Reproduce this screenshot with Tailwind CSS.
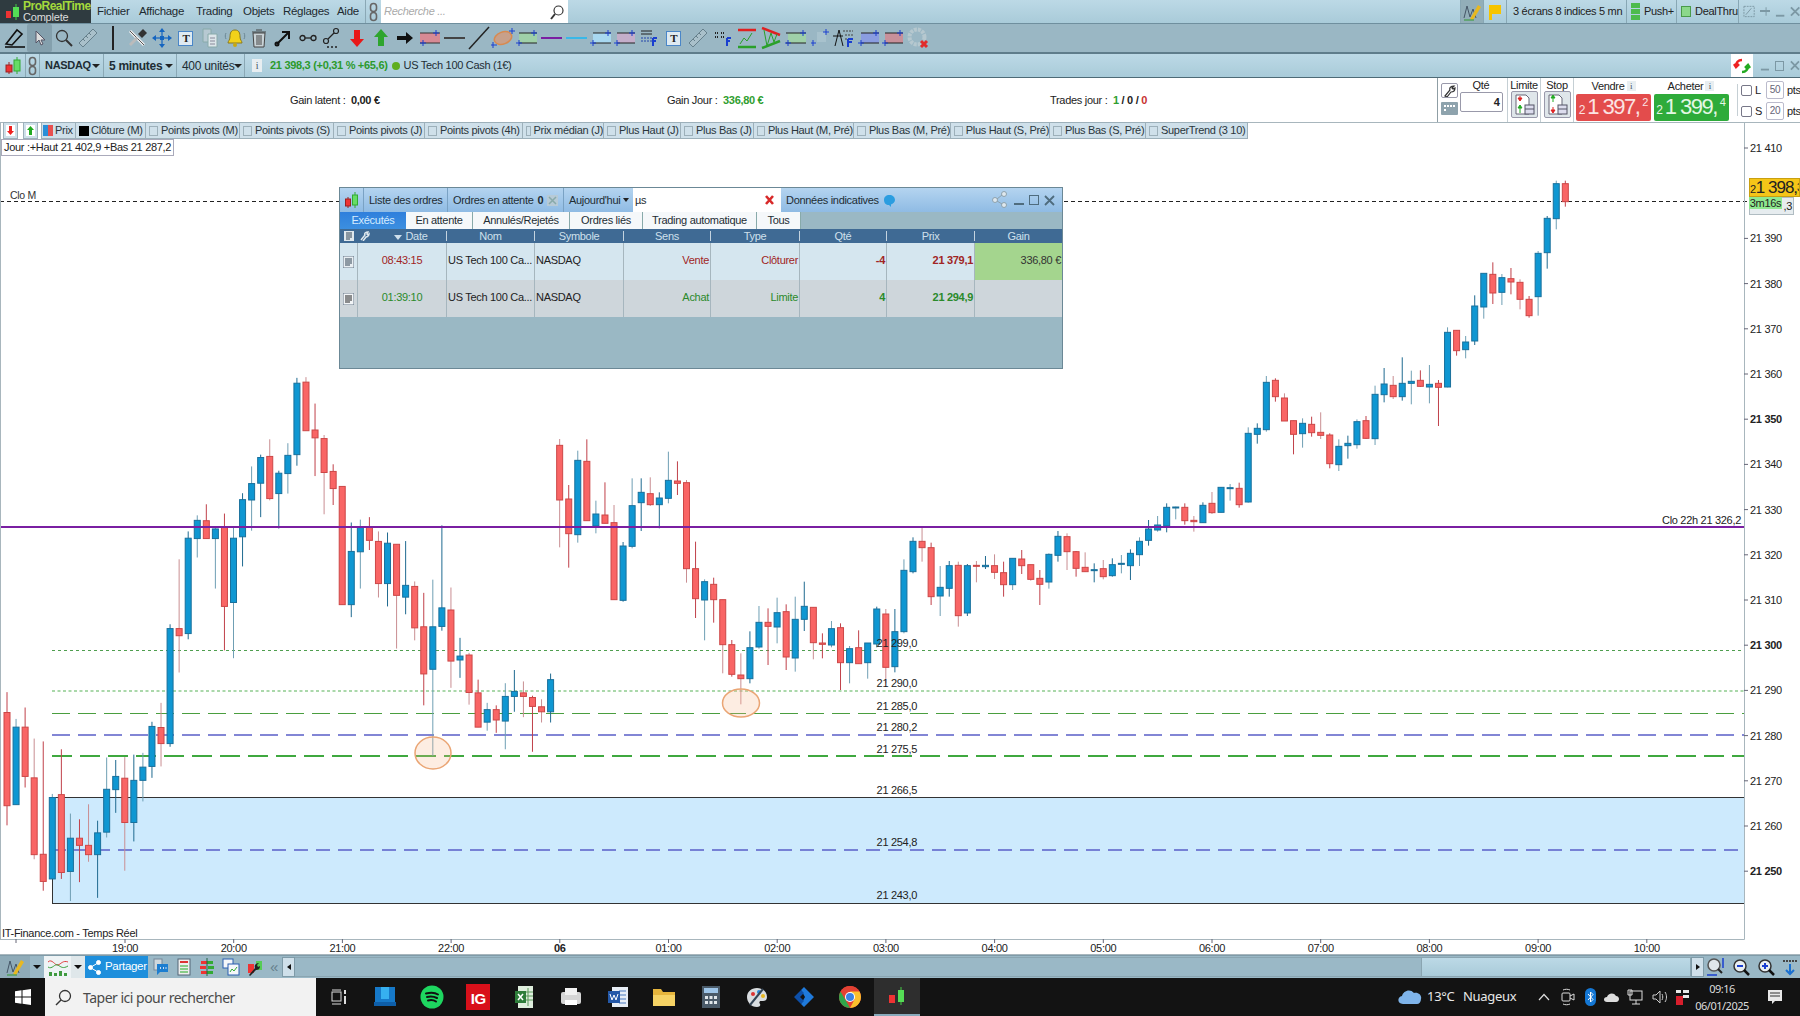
<!DOCTYPE html>
<html lang="fr">
<head>
<meta charset="UTF-8">
<title>ProRealTime</title>
<script src="https://cdn.jsdelivr.net/npm/@tailwindcss/browser@4"></script>
</head>
<body class="w-[1800px] h-[1016px] overflow-hidden flex flex-col bg-white text-[11px] tracking-[-0.3px] whitespace-nowrap text-[#222] font-['Liberation_Sans',Arial,sans-serif]">

<!-- title bar -->
<div class="h-[24px] flex items-center bg-gradient-to-b from-[#bcd9e6] to-[#a9cbd9] border-b border-[#6f8f9e]">
  <div class="w-[91px] h-full bg-[#2f3b40] flex items-center pl-[5px] gap-[3px] shrink-0">
    <svg width="15" height="18" viewBox="0 0 15 18"><rect x="1" y="8" width="5" height="7" fill="#e33"/><line x1="11" y1="1" x2="11" y2="17" stroke="#4c4"/><rect x="8" y="4" width="6" height="10" fill="#5d5"/></svg>
    <div class="leading-[11px]"><div class="text-[12px] text-[#a4d93c] font-bold tracking-[-0.5px]">ProRealTime</div><div class="text-[#ddd] text-[11px] tracking-[-0.2px]">Complete</div></div>
  </div>
  <div class="flex items-center text-[#1d2a30] pl-[6px] text-[11.500px]">
    <span class="w-[42px]">Fichier</span><span class="w-[57px]">Affichage</span><span class="w-[47px]">Trading</span><span class="w-[40px]">Objets</span><span class="w-[54px]">Réglages</span><span class="w-[27px]">Aide</span>
  </div>
  <div class="w-[15px] h-full flex items-center justify-center ml-[1px] mr-[1px] border-l border-[#8aa8b5]">
    <svg width="9" height="20" viewBox="0 0 9 20" fill="none" stroke="#666" stroke-width="1.6"><rect x="1.5" y="1.5" width="6" height="8" rx="3"/><rect x="1.5" y="10.5" width="6" height="8" rx="3"/></svg>
  </div>
  <div class="w-[187px] h-[23px] bg-white flex items-center justify-between pl-[3px] pr-[3px] italic text-[#aaa] text-[11px]">
    Recherche ...
    <svg width="16" height="16" viewBox="0 0 16 16" fill="none" stroke="#333"><circle cx="9.5" cy="6.5" r="4.5" stroke-width="1.2"/><line x1="6" y1="10" x2="2" y2="15" stroke-width="2"/></svg>
  </div>
  <div class="flex-1"></div>
  <div class="w-[24px] h-full bg-[#92aeb9] flex items-center justify-center border-x border-[#88a7b4]">
    <svg width="20" height="20" viewBox="0 0 20 20" fill="none"><path d="M2 16L5 4l3 11 3-8 3 9" stroke="#456" /><path d="M8 17L16 3l3 2-8 13z" fill="#e8b820"/><line x1="2" y1="18" x2="12" y2="18" stroke="#393"/></svg>
  </div>
  <div class="w-[23px] h-full flex items-center justify-center border-r border-[#88a7b4]">
    <svg width="16" height="18" viewBox="0 0 16 18"><path d="M2 2h12v9H5v6H2z" fill="#f6c400"/></svg>
  </div>
  <div class="w-[120px] pl-[6px] border-r border-[#88a7b4] h-full flex items-center">3 écrans 8 indices 5 mn</div>
  <div class="w-[50px] h-full flex items-center gap-[4px] pl-[4px] border-r border-[#88a7b4]">
    <div class="w-[9px] h-[18px] flex flex-col gap-[1px]"><div class="h-[5px] bg-[#4dbb4d]"></div><div class="h-[5px] bg-[#4dbb4d]"></div><div class="h-[5px] bg-[#4dbb4d]"></div></div><span>Push+</span>
  </div>
  <div class="w-[62px] h-full flex items-center gap-[4px] pl-[4px] border-r border-[#88a7b4]">
    <div class="w-[10px] h-[11px] bg-[#8bd88b] border border-[#4a9a4a]"></div><span>DealThru</span>
  </div>
  <div class="w-[61px] flex items-center text-[#7c98a4] pl-[4px] gap-[5px]">
    <svg width="13" height="13" viewBox="0 0 13 13" fill="none" stroke="#7c98a4"><rect x="1" y="1" width="11" height="11" stroke-dasharray="2 1"/><path d="M3 10l6-7"/></svg>
    <svg width="11" height="9" viewBox="0 0 11 9" fill="#7c98a4"><path d="M0 3h6V0l1 0v3h4v2H7v4H6V5H0z"/></svg>
    <svg width="10" height="12" viewBox="0 0 10 12"><rect x="1" y="9" width="9" height="2" fill="#7c98a4"/></svg>
    <svg width="11" height="11" viewBox="0 0 11 11" stroke="#7c98a4" stroke-width="2"><path d="M1 1l9 9M10 1l-9 9"/></svg>
  </div>
</div>

<!-- drawing toolbar -->
<div class="h-[30px] flex items-center pl-[3px] bg-[#9ab7c4] border-b-2 border-[#5f7d8b]">
  <div class="w-[24.4px] flex justify-center"><svg width="24" height="24" viewBox="0 0 24 24" fill="none" stroke="#111" stroke-width="1.6"><path d="M3 18L14 4l5 4-10 11z"/><line x1="2" y1="21" x2="22" y2="21"/></svg></div>
  <div class="w-[24.4px] h-[28px] flex justify-center items-center bg-[#84a0ad] rounded-[2px]"><svg width="14" height="18" viewBox="0 0 14 18"><path d="M3 2v12l3-3 2 5 2-1-2-4h4z" fill="#ddd" stroke="#556"/></svg></div>
  <div class="w-[24.4px] flex justify-center"><svg width="20" height="20" viewBox="0 0 20 20" fill="none" stroke="#333"><circle cx="8" cy="8" r="5.5" stroke-width="1.3"/><line x1="12" y1="12" x2="18" y2="18" stroke-width="2"/></svg></div>
  <div class="w-[24.4px] flex justify-center"><svg width="22" height="22" viewBox="0 0 22 22" fill="#a9c0ca" stroke="#66808c"><path d="M2 16L16 2l4 4L6 20z"/><path d="M6 12l2 2M9 9l2 2M12 6l2 2" fill="none"/></svg></div>
  <div class="w-[24.4px] flex justify-center"><div class="w-[2px] h-[24px] bg-[#222]"></div></div>
  <div class="w-[24.4px] flex justify-center"><svg width="22" height="22" viewBox="0 0 22 22" fill="none"><path d="M4 4l14 14" stroke="#eee" stroke-width="3"/><path d="M4 4l14 14" stroke="#555"/><path d="M12 7l5-5 4 4-5 5z" fill="#333"/><path d="M3 17l7-7 2 2-7 7z" fill="#bbb"/></svg></div>
  <div class="w-[24.4px] flex justify-center"><svg width="20" height="20" viewBox="0 0 20 20" fill="#1565c0"><path d="M10 0l3 4H7zM10 20l-3-4h6zM0 10l4-3v6zM20 10l-4 3V7z"/><rect x="8" y="8" width="4" height="4"/><rect x="9.4" y="3" width="1.2" height="14"/><rect x="3" y="9.4" width="14" height="1.2"/></svg></div>
  <div class="w-[24.4px] flex justify-center"><div class="w-[15px] h-[15px] border border-[#4a86c8] bg-[#dfeaf2] text-[11px] font-bold text-center leading-[13px] font-['Liberation_Serif',serif]">T</div></div>
  <div class="w-[24.4px] flex justify-center"><svg width="18" height="20" viewBox="0 0 18 20"><path d="M2 1h8v13H2z" fill="#b7c9d2" stroke="#8aa"/><path d="M7 6h9v13H7z" fill="#dde6ea" stroke="#8aa"/><path d="M9 10h5M9 13h5M9 16h5" stroke="#889"/></svg></div>
  <div class="w-[24.4px] flex justify-center"><svg width="24" height="20" viewBox="0 0 24 20" fill="none"><path d="M12 2c-4 0-5 3-5 7 0 3-2 4-2 6h14c0-2-2-3-2-6 0-4-1-7-5-7z" fill="#f2d21a" stroke="#8a7a20"/><circle cx="12" cy="17" r="2" fill="#c8a810"/><path d="M3 5c-1 2-1 4 0 6M21 5c1 2 1 4 0 6" stroke="#6b8794"/></svg></div>
  <div class="w-[24.4px] flex justify-center"><svg width="18" height="20" viewBox="0 0 18 20" fill="#c8d2d6" stroke="#444"><path d="M3 5h12l-1 14H4z"/><path d="M2 4h14M6 2h6M7 7v10M9 7v10M11 7v10" fill="none"/></svg></div>
  <div class="w-[24.4px] flex justify-center"><svg width="18" height="18" viewBox="0 0 18 18" fill="none" stroke="#111" stroke-width="2"><path d="M3 15L15 3M8 3h7v7"/><circle cx="3" cy="15" r="1.5"/></svg></div>
  <div class="w-[24.4px] flex justify-center"><svg width="18" height="10" viewBox="0 0 18 10" fill="none" stroke="#222" stroke-width="1.3"><circle cx="3.5" cy="5" r="2.5"/><circle cx="14.5" cy="5" r="2.5"/><line x1="6" y1="5" x2="12" y2="5"/></svg></div>
  <div class="w-[24.4px] flex justify-center"><svg width="20" height="22" viewBox="0 0 20 22" fill="none" stroke="#222" stroke-width="1.2"><circle cx="14" cy="4" r="2.5"/><circle cx="4" cy="14" r="2.5"/><line x1="12" y1="6" x2="6" y2="12"/><path d="M5 20h2M9 20h2M13 20h2" stroke-width="1.6"/></svg></div>
  <div class="w-[24.4px] flex justify-center"><svg width="14" height="18" viewBox="0 0 14 18"><path d="M4 1h6v9h4l-7 8-7-8h4z" fill="#e81818"/></svg></div>
  <div class="w-[24.4px] flex justify-center"><svg width="14" height="18" viewBox="0 0 14 18"><path d="M4 17h6V8h4L7 0 0 8h4z" fill="#2ea52e"/></svg></div>
  <div class="w-[24.4px] flex justify-center"><svg width="16" height="12" viewBox="0 0 16 12"><path d="M0 4h9V0l7 6-7 6V8H0z" fill="#111"/></svg></div>
  <div class="w-[24.4px] flex justify-center"><svg width="24" height="18" viewBox="0 0 24 18"><rect x="2" y="4" width="20" height="10" fill="#d78a94"/><path d="M2 4h20M2 14h20" stroke="#333"/><path d="M18 1v6M15 4h6M5 11v6M2 14h6" stroke="#1a3fd0"/></svg></div>
  <div class="w-[24.4px] flex justify-center"><div class="w-[21px] h-[2px] bg-[#444]"></div></div>
  <div class="w-[24.4px] flex justify-center"><svg width="22" height="24" viewBox="0 0 22 24"><line x1="1" y1="23" x2="21" y2="1" stroke="#222" stroke-width="1.5"/></svg></div>
  <div class="w-[24.4px] flex justify-center"><svg width="24" height="22" viewBox="0 0 24 22" fill="none"><ellipse cx="12" cy="11" rx="9" ry="6" transform="rotate(-20 12 11)" fill="#c8a08a" stroke="#d88a50" stroke-width="1.5"/><path d="M21 1v6M18 4h6M2 15v6M0 18h6" stroke="#1a3fd0"/></svg></div>
  <div class="w-[24.4px] flex justify-center"><svg width="24" height="18" viewBox="0 0 24 18"><rect x="4" y="4" width="18" height="10" fill="#9fd0a8"/><path d="M4 4h18M4 14h18" stroke="#222"/><path d="M19 1v6M16 4h6M4 11v6M1 14h6" stroke="#1a3fd0"/></svg></div>
  <div class="w-[24.4px] flex justify-center"><div class="w-[21px] h-[2px] bg-[#7a1fa2]"></div></div>
  <div class="w-[24.4px] flex justify-center"><div class="w-[21px] h-[2px] bg-[#39b8e8]"></div></div>
  <div class="w-[24.4px] flex justify-center"><svg width="24" height="18" viewBox="0 0 24 18"><rect x="4" y="4" width="18" height="10" fill="#a8d8f0"/><path d="M4 4h18M4 14h18" stroke="#222"/><path d="M19 1v6M16 4h6M4 11v6M1 14h6" stroke="#1a3fd0"/></svg></div>
  <div class="w-[24.4px] flex justify-center"><svg width="24" height="18" viewBox="0 0 24 18"><rect x="4" y="4" width="18" height="10" fill="#c4aeca"/><path d="M4 4h18M4 14h18" stroke="#222"/><path d="M19 1v6M16 4h6M4 11v6M1 14h6" stroke="#1a3fd0"/></svg></div>
  <div class="w-[24.4px] flex justify-center"><svg width="18" height="18" viewBox="0 0 18 18"><path d="M1 2h11M1 5h11" stroke="#222"/><path d="M1 9h11M1 12h11" stroke="#2244aa" stroke-dasharray="2 1"/><path d="M13 9h4M13 12h3M13 9v8" stroke="#1a3fd0" stroke-width="2"/></svg></div>
  <div class="w-[24.4px] flex justify-center"><div class="w-[15px] h-[15px] border border-[#4a86c8] bg-[#dfeaf2] text-[11px] font-bold text-center leading-[13px] font-['Liberation_Serif',serif]">T</div></div>
  <div class="w-[24.4px] flex justify-center"><svg width="22" height="22" viewBox="0 0 22 22" fill="#a9c0ca" stroke="#66808c"><path d="M2 16L16 2l4 4L6 20z"/><path d="M6 12l2 2M9 9l2 2M12 6l2 2" fill="none"/></svg></div>
  <div class="w-[24.4px] flex justify-center"><svg width="18" height="18" viewBox="0 0 18 18"><path d="M1 4h4M7 4h4M1 8h4M7 8h4" stroke="#222" stroke-dasharray="1 1" stroke-width="2"/><path d="M13 9h4M13 12h3M13 9v8" stroke="#1a3fd0" stroke-width="2"/></svg></div>
  <div class="w-[24.4px] flex justify-center"><svg width="20" height="22" viewBox="0 0 20 22" fill="none"><path d="M1 3h18" stroke="#e02020" stroke-width="2.5"/><path d="M1 20h18" stroke="#2aa02a" stroke-width="2.5"/><path d="M3 17l4-6 3 3 5-8" stroke="#2aa02a"/></svg></div>
  <div class="w-[24.4px] flex justify-center"><svg width="22" height="24" viewBox="0 0 22 24" fill="none"><path d="M2 2l18 7" stroke="#e02020" stroke-width="2.5"/><path d="M2 22l18-7" stroke="#2aa02a" stroke-width="2.5"/><path d="M4 4l3 16 4-13 3 9 3-8" stroke="#2aa02a"/></svg></div>
  <div class="w-[24.4px] flex justify-center"><svg width="24" height="18" viewBox="0 0 24 18"><rect x="4" y="4" width="18" height="10" fill="#9fd0a8"/><path d="M2 4h20M2 14h20" stroke="#222"/><path d="M19 1v6M16 4h6M4 11v6M1 14h6" stroke="#1a3fd0"/></svg></div>
  <div class="w-[24.4px] flex justify-center"><svg width="18" height="18" viewBox="0 0 18 18"><rect x="6" y="3" width="9" height="10" fill="#a8c2cd"/><path d="M15 0v6M12 3h6M2 11v6M0 14h5" stroke="#1a3fd0"/></svg></div>
  <div class="w-[24.4px] flex justify-center"><svg width="22" height="20" viewBox="0 0 22 20"><path d="M6 2L2 18M6 2l4 16M0 8h10" stroke="#111"/><path d="M10 3h10M12 7h8M12 11h6" stroke="#444" stroke-dasharray="2 1"/><path d="M15 11h5M15 14h4M15 11v8" stroke="#1a3fd0" stroke-width="2"/></svg></div>
  <div class="w-[24.4px] flex justify-center"><svg width="24" height="18" viewBox="0 0 24 18"><rect x="4" y="4" width="18" height="10" fill="#8a9de0"/><path d="M4 4h18M4 14h18" stroke="#222"/><path d="M19 1v6M16 4h6M4 11v6M1 14h6" stroke="#1a3fd0"/></svg></div>
  <div class="w-[24.4px] flex justify-center"><svg width="24" height="18" viewBox="0 0 24 18"><rect x="4" y="4" width="18" height="10" fill="#c8909a"/><path d="M4 4h18M4 14h18" stroke="#222"/><path d="M19 1v6M16 4h6M4 11v6M1 14h6" stroke="#1a3fd0"/></svg></div>
  <div class="w-[24.4px] flex justify-center"><svg width="22" height="24" viewBox="0 0 22 24" fill="none"><circle cx="10" cy="11" r="7.5" stroke="#b6c8cf" stroke-width="4" stroke-dasharray="3 1"/><path d="M14 15l6 6M20 15l-6 6" stroke="#e02b2b" stroke-width="3"/></svg></div>
</div>

<!-- instrument bar -->
<div class="h-[24px] flex items-center bg-gradient-to-b from-[#bcd9e6] to-[#a9cbd9] border-b border-[#4e6a76]">
  <div class="w-[26px] h-full flex items-center justify-center border-r border-[#8aa8b5]"><svg width="18" height="20" viewBox="0 0 18 20"><line x1="5" y1="6" x2="5" y2="18" stroke="#922"/><rect x="2" y="9" width="6" height="7" fill="#e33" stroke="#922"/><line x1="13" y1="1" x2="13" y2="18" stroke="#3a3"/><rect x="10" y="4" width="6" height="11" fill="#6d6" stroke="#3a3"/></svg></div>
  <div class="w-[14px] h-full flex items-center justify-center border-r border-[#8aa8b5]"><svg width="9" height="20" viewBox="0 0 9 20" fill="none" stroke="#666" stroke-width="1.6"><rect x="1.5" y="1.5" width="6" height="8" rx="3"/><rect x="1.5" y="10.5" width="6" height="8" rx="3"/></svg></div>
  <div class="w-[64px] h-full flex items-center justify-between pl-[5px] pr-[3px] border-r border-[#8aa8b5] font-bold text-[#1e2d34]">NASDAQ<span class="w-0 h-0 border-x-[4px] border-x-transparent border-t-[4px] border-t-[#222]"></span></div>
  <div class="w-[73px] h-full flex items-center justify-between pl-[5px] pr-[3px] border-r border-[#8aa8b5] font-bold text-[#1e2d34] text-[12px]">5 minutes<span class="w-0 h-0 border-x-[4px] border-x-transparent border-t-[4px] border-t-[#222]"></span></div>
  <div class="w-[68px] h-full flex items-center justify-between pl-[5px] pr-[3px] border-r border-[#8aa8b5] text-[#1e2d34] text-[12px]">400 unités<span class="w-0 h-0 border-x-[4px] border-x-transparent border-t-[4px] border-t-[#222]"></span></div>
  <div class="w-[10px] h-[13px] ml-[7px] bg-[#e8eef1] text-[10px] text-center text-[#456] leading-[13px] font-['Liberation_Serif',serif]">i</div>
  <span class="ml-[8px] font-bold text-[#2c9a2c]">21 398,3 (+0,31 % +65,6)</span>
  <span class="w-[8px] h-[8px] rounded-full bg-[#5fae1f] ml-[4px] mr-[4px]"></span>
  <span class="text-[#1e2d34]">US Tech 100 Cash (1€)</span>
  <div class="flex-1"></div>
  <div class="w-[22px] h-full bg-white flex items-center justify-center"><svg width="18" height="18" viewBox="0 0 18 18" fill="none" stroke-width="2.5"><path d="M9 3C5 3 3 6 3 9M1 7l2 3 3-3" stroke="#e22"/><path d="M9 15c4 0 6-3 6-6M17 11l-2-3-3 3" stroke="#2a2"/></svg></div>
  <div class="w-[47px] flex items-center text-[#7c98a4] pl-[7px] gap-[6px]">
    <svg width="10" height="12" viewBox="0 0 10 12"><rect x="1" y="9" width="9" height="2" fill="#7c98a4"/></svg>
    <div class="w-[10px] h-[10px] border-[1.5px] border-[#7c98a4]"></div>
    <svg width="11" height="11" viewBox="0 0 11 11" stroke="#7c98a4" stroke-width="2"><path d="M1 1l9 9M10 1l-9 9"/></svg>
  </div>
</div>

<!-- daily stats and order ticket -->
<div class="h-[44px] flex bg-white">
  <div class="w-[1437px] shrink-0 grid grid-cols-[290px_377px_383px_1fr] items-center">
    <span></span>
    <span>Gain latent :&nbsp; <b>0,00 €</b></span>
    <span>Gain Jour :&nbsp; <b class="text-[#2f9e2f]">336,80 €</b></span>
    <span>Trades jour :&nbsp; <b class="text-[#2f9e2f]">1</b> <b>/ 0 /</b> <b class="text-[#c83232]">0</b></span>
  </div>
  <div class="w-[363px] shrink-0 overflow-hidden border-l border-[#8f9ea5] flex">
    <div class="w-[21px] shrink-0 pl-[3px] pt-[5px] flex flex-col gap-[4px]">
      <div class="w-[17px] h-[15px] border border-[#99a] rounded-[2px] flex items-center justify-center"><svg width="12" height="12" viewBox="0 0 12 12" fill="none" stroke="#333" stroke-width="1.2"><path d="M1 11l5-6c-1-2 1-4 4-4L8 3l1 1 2-1c0 3-2 4-4 4l-4 5z"/></svg></div>
      <div class="w-[17px] h-[13px] bg-[#8ea3ad] rounded-[1px] border-[3px] border-[#8ea3ad] flex flex-wrap gap-[1px]"><div class="w-[2px] h-[2px] bg-white"></div><div class="w-[2px] h-[2px] bg-white"></div><div class="w-[2px] h-[2px] bg-white"></div><div class="w-[2px] h-[2px] bg-white"></div><div class="w-[2px] h-[2px] bg-white"></div></div>
    </div>
    <div class="w-[44px] shrink-0 flex flex-col items-center pt-[1px]">
      <span class="leading-[12px]">Qté</span>
      <div class="w-[43px] h-[20px] mt-[1px] border border-[#99a] rounded-[2px] text-right pr-[2px] leading-[18px] font-bold">4</div>
    </div>
    <div class="w-[4px] shrink-0"></div>
    <div class="w-[33px] shrink-0 flex flex-col items-center pt-[1px] border-l border-[#c5cfd4]">
      <span class="leading-[12px]">Limite</span>
      <div class="w-[27px] h-[27px] bg-[#dfe6ea] border border-[#99a] rounded-[2px] flex items-center justify-center"><svg width="21" height="22" viewBox="0 0 21 22"><path d="M2 1h10l3 3v16H2z" fill="#fff" stroke="#667"/><path d="M6 2v3M4 4l2 3 2-3z" fill="#d22" stroke="#d22"/><path d="M6 19v-5M4 14l2-3 2 3z" fill="#2a2" stroke="#2a2"/><rect x="11" y="11" width="9" height="9" fill="#dde" stroke="#556"/><line x1="11" y1="15" x2="20" y2="15" stroke="#556"/></svg></div>
    </div>
    <div class="w-[33px] shrink-0 flex flex-col items-center pt-[1px] border-l border-[#c5cfd4]">
      <span class="leading-[12px]">Stop</span>
      <div class="w-[27px] h-[27px] bg-[#dfe6ea] border border-[#99a] rounded-[2px] flex items-center justify-center"><svg width="21" height="22" viewBox="0 0 21 22"><path d="M2 1h10l3 3v16H2z" fill="#fff" stroke="#667"/><path d="M6 8V3M4 4l2-3 2 3z" fill="#2a2" stroke="#2a2"/><path d="M6 13v3M4 16l2 3 2-3z" fill="#d22" stroke="#d22"/><rect x="11" y="11" width="9" height="9" fill="#dde" stroke="#556"/><line x1="11" y1="15" x2="20" y2="15" stroke="#556"/></svg></div>
    </div>
    <div class="w-[2px] shrink-0 border-l border-[#c5cfd4]"></div>
    <div class="w-[77px] shrink-0 flex flex-col items-center">
      <span class="leading-[14px] pt-[1px] flex items-center gap-[2px]">Vendre <span class="w-[9px] h-[10px] bg-[#e8eef1] text-[9px] text-center text-[#456] leading-[10px] font-['Liberation_Serif',serif]">i</span></span>
      <div class="w-[75px] h-[27px] mt-[1px] rounded-[2px] bg-[#e34c4c] text-[#fbe3e3] flex items-baseline justify-center leading-[26px] overflow-hidden"><span class="text-[12px] mr-[2px]">2</span><span class="text-[22px] tracking-[-1.5px]">1 397,</span><span class="text-[11px] relative top-[-8px] ml-[3px]">2</span></div>
    </div>
    <div class="w-[78px] shrink-0 flex flex-col items-center">
      <span class="leading-[14px] pt-[1px] flex items-center gap-[2px]">Acheter <span class="w-[9px] h-[10px] bg-[#e8eef1] text-[9px] text-center text-[#456] leading-[10px] font-['Liberation_Serif',serif]">i</span></span>
      <div class="w-[75px] h-[27px] mt-[1px] rounded-[2px] bg-[#2eab3a] text-[#e4f7e4] flex items-baseline justify-center leading-[26px] overflow-hidden"><span class="text-[12px] mr-[2px]">2</span><span class="text-[22px] tracking-[-1.5px]">1 399,</span><span class="text-[11px] relative top-[-8px] ml-[3px]">4</span></div>
    </div>
    <div class="w-[8px] shrink-0 border-r border-[#c5cfd4] my-[6px]"></div>
    <div class="pl-[3px] pt-[3px] flex flex-col gap-[3px]">
      <div class="flex items-center gap-[3px] h-[18px]"><div class="w-[11px] h-[11px] border border-[#778] rounded-[2px]"></div><span class="w-[8px]">L</span><div class="w-[18px] h-[18px] border border-[#bbc] rounded-[2px] text-[10px] text-center leading-[16px] text-[#667]">50</div><span>pts</span></div>
      <div class="flex items-center gap-[3px] h-[18px]"><div class="w-[11px] h-[11px] border border-[#778] rounded-[2px]"></div><span class="w-[8px]">S</span><div class="w-[18px] h-[18px] border border-[#bbc] rounded-[2px] text-[10px] text-center leading-[16px] text-[#667]">20</div><span>pts</span></div>
    </div>
  </div>
</div>

<!-- chart -->
<div class="relative h-[833px] border-t border-[#a8b6bd]">
  <svg id="chart" class="absolute left-0 top-[-1px] font-['Liberation_Sans',Arial,sans-serif]" width="1800" height="833" viewBox="0 122 1800 833"></svg>

  <div class="absolute left-[3px] top-[-1px] h-[17px] flex items-stretch text-[#2a363c]">
    <div class="w-[15px] mr-[5px] bg-[#cfe0ea] border border-[#9db0ba] flex items-center justify-center"><svg width="9" height="11" viewBox="0 0 9 11"><rect x="0" y="0" width="9" height="11" fill="#fff"/><path d="M3 1h3v5h2L4.500 10 1 6h2z" fill="#e22"/></svg></div>
    <div class="w-[15px] mr-[3px] bg-[#cfe0ea] border border-[#9db0ba] flex items-center justify-center"><svg width="9" height="11" viewBox="0 0 9 11"><rect x="0" y="0" width="9" height="11" fill="#fff"/><path d="M3 10h3V5h2L4.500 1 1 5h2z" fill="#2a2"/></svg></div>
    <div class="w-[34px] bg-[#cfe0ea] border-y border-l border-[#9db0ba] flex items-center gap-[2px] pl-[1px]"><div class="w-[10px] h-[11px] bg-[linear-gradient(90deg,#2a8fd8_50%,#e85050_50%)]"></div>Prix</div>
    <div class="w-[70px] bg-[#cfe0ea] border-y border-l border-[#9db0ba] flex items-center gap-[2px] pl-[3px]"><div class="w-[10px] h-[10px] bg-black"></div>Clôture (M)</div>
    <div class="w-[94px] bg-[#cfe0ea] border-y border-l border-[#9db0ba] flex items-center gap-[3px] pl-[3px]"><div class="w-[9px] h-[10px] border border-[#9db0ba]"></div>Points pivots (M)</div>
    <div class="w-[94px] bg-[#cfe0ea] border-y border-l border-[#9db0ba] flex items-center gap-[3px] pl-[3px]"><div class="w-[9px] h-[10px] border border-[#9db0ba]"></div>Points pivots (S)</div>
    <div class="w-[91px] bg-[#cfe0ea] border-y border-l border-[#9db0ba] flex items-center gap-[3px] pl-[3px]"><div class="w-[9px] h-[10px] border border-[#9db0ba]"></div>Points pivots (J)</div>
    <div class="w-[98px] bg-[#cfe0ea] border-y border-l border-[#9db0ba] flex items-center gap-[3px] pl-[3px]"><div class="w-[9px] h-[10px] border border-[#9db0ba]"></div>Points pivots (4h)</div>
    <div class="w-[81px] bg-[#cfe0ea] border-y border-l border-[#9db0ba] flex items-center gap-[3px] pl-[3px]"><div class="w-[9px] h-[10px] border border-[#9db0ba]"></div>Prix médian (J)</div>
    <div class="w-[77px] bg-[#cfe0ea] border-y border-l border-[#9db0ba] flex items-center gap-[3px] pl-[3px]"><div class="w-[9px] h-[10px] border border-[#9db0ba]"></div>Plus Haut (J)</div>
    <div class="w-[73px] bg-[#cfe0ea] border-y border-l border-[#9db0ba] flex items-center gap-[3px] pl-[3px]"><div class="w-[9px] h-[10px] border border-[#9db0ba]"></div>Plus Bas (J)</div>
    <div class="w-[100px] bg-[#cfe0ea] border-y border-l border-[#9db0ba] flex items-center gap-[3px] pl-[3px]"><div class="w-[9px] h-[10px] border border-[#9db0ba]"></div>Plus Haut (M, Pré)</div>
    <div class="w-[97px] bg-[#cfe0ea] border-y border-l border-[#9db0ba] flex items-center gap-[3px] pl-[3px]"><div class="w-[9px] h-[10px] border border-[#9db0ba]"></div>Plus Bas (M, Pré)</div>
    <div class="w-[99px] bg-[#cfe0ea] border-y border-l border-[#9db0ba] flex items-center gap-[3px] pl-[3px]"><div class="w-[9px] h-[10px] border border-[#9db0ba]"></div>Plus Haut (S, Pré)</div>
    <div class="w-[96px] bg-[#cfe0ea] border-y border-l border-[#9db0ba] flex items-center gap-[3px] pl-[3px]"><div class="w-[9px] h-[10px] border border-[#9db0ba]"></div>Plus Bas (S, Pré)</div>
    <div class="w-[103px] bg-[#cfe0ea] border border-[#9db0ba] flex items-center gap-[3px] pl-[3px]"><div class="w-[9px] h-[10px] border border-[#9db0ba]"></div>SuperTrend (3 10)</div>
  </div>
  <div class="absolute left-[1px] top-[16px] h-[17px] px-[2px] bg-white border border-[#aab] text-[#222] leading-[15px]">Jour :+Haut 21 402,9 +Bas 21 287,2</div>

  <!-- order list window -->
  <div class="absolute left-[339px] top-[64px] w-[724px] h-[182px] bg-[#9ab8c4] border border-[#6b8896] flex flex-col">
    <div class="h-[24px] flex items-center bg-gradient-to-b from-[#b4d4f0] to-[#8fbbe4] text-[#1e2d34]">
      <div class="w-[24px] h-full flex items-center justify-center border-r border-[#7aa2c4]"><svg width="16" height="18" viewBox="0 0 16 18"><line x1="4" y1="6" x2="4" y2="17" stroke="#922"/><rect x="1.500" y="8" width="5" height="7" fill="#e33" stroke="#922"/><line x1="11" y1="1" x2="11" y2="17" stroke="#3a3"/><rect x="8.500" y="4" width="5" height="10" fill="#6d6" stroke="#3a3"/></svg></div>
      <div class="w-[84px] h-full flex items-center pl-[5px] border-r border-[#7aa2c4]">Liste des ordres</div>
      <div class="w-[116px] h-full flex items-center pl-[5px] gap-[4px] border-r border-[#7aa2c4]">Ordres en attente <b>0</b><svg width="11" height="11" viewBox="0 0 11 11"><rect width="11" height="11" fill="#b7cad6"/><path d="M2 2l7 7M9 2l-7 7" stroke="#8aa" stroke-width="1.5"/></svg></div>
      <div class="w-[69px] h-full flex items-center pl-[5px] gap-[3px]">Aujourd'hui<span class="w-0 h-0 border-x-[3px] border-x-transparent border-t-[4px] border-t-[#222]"></span></div>
      <div class="w-[148px] h-full bg-white flex items-center justify-between pl-[2px] pr-[7px]">
        <span>µs</span>
        <svg width="9" height="10" viewBox="0 0 9 10" stroke="#d82a2a" stroke-width="2.600"><path d="M1 1l7 8M8 1l-7 8"/></svg>
      </div>
      <div class="flex-1 h-full flex items-center pl-[5px] gap-[4px]">Données indicatives
        <svg width="13" height="13" viewBox="0 0 13 13"><path d="M6.500 1C3 1 1 3 1 6s2 5 5 5l2 2v-2.500c2-1 4-2.500 4-4.500 0-3-2.500-5-5.500-5z" fill="#2b9de0"/></svg>
      </div>
      <div class="w-[75px] h-full flex items-center pl-[5px] gap-[5px] text-[#5f7e92]">
        <svg width="17" height="18" viewBox="0 0 17 18" fill="#dfe8ee" stroke="#8ea2ae"><circle cx="3" cy="9" r="2.500"/><circle cx="12" cy="3" r="2.500"/><circle cx="12" cy="14" r="2.500"/><path d="M5 8l5-4M5 10l5 3" fill="none"/></svg>
        <svg width="10" height="12" viewBox="0 0 10 12"><rect x="0" y="9" width="10" height="2" fill="#4f6c7e"/></svg>
        <div class="w-[10px] h-[10px] border-[1.5px] border-[#4f6c7e]"></div>
        <svg width="11" height="11" viewBox="0 0 11 11" stroke="#4f6c7e" stroke-width="1.800"><path d="M1 1l9 9M10 1l-9 9"/></svg>
      </div>
    </div>
    <div class="h-[17px] flex items-stretch text-center text-[#1e2d34]">
      <div class="w-[66px] bg-gradient-to-b from-[#2f7fdc] to-[#3c8fe0] text-[#d5ecff] leading-[17px]">Exécutés</div>
      <div class="w-[67px] bg-[#f5f8fa] border-r border-[#8aa] leading-[17px]">En attente</div>
      <div class="w-[97px] bg-[#f5f8fa] border-r border-[#8aa] leading-[17px]">Annulés/Rejetés</div>
      <div class="w-[73px] bg-[#f5f8fa] border-r border-[#8aa] leading-[17px]">Ordres liés</div>
      <div class="w-[114px] bg-[#f5f8fa] border-r border-[#8aa] leading-[17px]">Trading automatique</div>
      <div class="w-[44px] bg-[#f5f8fa] border-r border-[#8aa] leading-[17px]">Tous</div>
    </div>
    <div class="h-[14px] grid grid-cols-[18px_89px_88px_89px_87px_89px_87px_88px_1fr] bg-[#3f6a94] text-[#cfe0ec] text-center leading-[14px]">
      <div class="flex items-center justify-center"><svg width="10" height="10" viewBox="0 0 10 10"><rect width="10" height="10" fill="#dfe8ee"/><path d="M2 2h6M2 4h6M2 6h6M2 8h4" stroke="#345"/></svg></div>
      <div class="relative border-r border-[#c4d3df] my-[2px] leading-[10px] pl-[18px]"><svg class="absolute left-[2px] top-0" width="10" height="10" viewBox="0 0 10 10" fill="none" stroke="#dfe8ee" stroke-width="1.500"><path d="M1 9l4-5c-1-2 1-3 3-3L7 3l1 1 1-1c0 2-2 3-3 3L3 10"/></svg><span class="inline-block w-0 h-0 border-x-[4px] border-x-transparent border-t-[5px] border-t-[#cfe0ec] mr-[3px]"></span>Date</div>
      <div class="border-r border-[#c4d3df] my-[2px] leading-[10px]">Nom</div>
      <div class="border-r border-[#c4d3df] my-[2px] leading-[10px]">Symbole</div>
      <div class="border-r border-[#c4d3df] my-[2px] leading-[10px]">Sens</div>
      <div class="border-r border-[#c4d3df] my-[2px] leading-[10px]">Type</div>
      <div class="border-r border-[#c4d3df] my-[2px] leading-[10px]">Qté</div>
      <div class="border-r border-[#c4d3df] my-[2px] leading-[10px]">Prix</div>
      <div class="my-[2px] leading-[10px]">Gain</div>
    </div>
    <div class="h-[37px] grid grid-cols-[18px_89px_88px_89px_87px_89px_87px_88px_1fr] bg-[#d5e6ef] text-[#a02424] items-stretch leading-[35px]">
      <div class="flex items-center justify-center border-r border-[#a6b6be]"><svg width="11" height="12" viewBox="0 0 11 12"><rect width="11" height="12" fill="#e8eef2" stroke="#678"/><path d="M2 3h7M2 5h7M2 7h7M2 9h5" stroke="#345"/></svg></div>
      <div class="text-center border-r border-[#a6b6be]">08:43:15</div>
      <div class="pl-[1px] text-[#222] border-r border-[#a6b6be]">US Tech 100 Ca...</div>
      <div class="pl-[1px] text-[#222] border-r border-[#a6b6be]">NASDAQ</div>
      <div class="text-right pr-[1px] border-r border-[#a6b6be]">Vente</div>
      <div class="text-right pr-[1px] border-r border-[#a6b6be]">Clôturer</div>
      <div class="text-right pr-[1px] font-bold border-r border-[#a6b6be]">-4</div>
      <div class="text-right pr-[1px] font-bold border-r border-[#a6b6be]">21 379,1</div>
      <div class="text-right pr-[1px] bg-[#a4d58e] text-[#333]">336,80 €</div>
    </div>
    <div class="h-[37px] grid grid-cols-[18px_89px_88px_89px_87px_89px_87px_88px_1fr] bg-[#ced6db] text-[#2a8a2a] items-stretch leading-[35px]">
      <div class="flex items-center justify-center border-r border-[#a6b6be]"><svg width="11" height="12" viewBox="0 0 11 12"><rect width="11" height="12" fill="#f2f5f7" stroke="#678"/><path d="M2 3h7M2 5h7M2 7h7M2 9h5" stroke="#222"/></svg></div>
      <div class="text-center border-r border-[#a6b6be]">01:39:10</div>
      <div class="pl-[1px] text-[#222] border-r border-[#a6b6be]">US Tech 100 Ca...</div>
      <div class="pl-[1px] text-[#222] border-r border-[#a6b6be]">NASDAQ</div>
      <div class="text-right pr-[1px] border-r border-[#a6b6be]">Achat</div>
      <div class="text-right pr-[1px] border-r border-[#a6b6be]">Limite</div>
      <div class="text-right pr-[1px] font-bold border-r border-[#a6b6be]">4</div>
      <div class="text-right pr-[1px] font-bold border-r border-[#a6b6be]">21 294,9</div>
      <div></div>
    </div>
  </div>

  <!-- last price tag -->
  <div class="absolute left-[1749px] top-[55px] w-[51px] h-[19px] bg-[#f5c518] border border-[#c9a010] text-[#222] leading-[18px] overflow-hidden"><span class="text-[11px]">2</span><span class="text-[17px] tracking-[-1px]">1 398,</span><span class="text-[10px] align-top">3</span></div>
  <div class="absolute left-[1749px] top-[74px] w-[45px] h-[18px] bg-[#e6ecef] border border-[#b0bcc2] text-right pr-[1px] leading-[16px]">,3</div>
  <div class="absolute left-[1749px] top-[74px] w-[33px] h-[12px] bg-[#8fe88f] text-center leading-[12px]">3m16s</div>
</div>

<!-- bottom toolbar -->
<div class="h-[23px] flex items-stretch bg-[#9ab8c6] border-t border-[#7f9ba8]">
  <div class="w-[30px] flex items-center justify-center bg-[#8fabb8]"><svg width="20" height="20" viewBox="0 0 20 20" fill="none"><path d="M2 16L5 4l3 11 3-8 3 9" stroke="#456"/><path d="M8 17L16 3l3 2-8 13z" fill="#e8b820"/><line x1="2" y1="18" x2="12" y2="18" stroke="#393"/></svg></div>
  <div class="w-[14px] flex items-center justify-center"><span class="w-0 h-0 border-x-[4px] border-x-transparent border-t-[4px] border-t-[#111]"></span></div>
  <div class="w-[27px] flex items-center justify-center bg-[#eef3f5]"><svg width="22" height="20" viewBox="0 0 22 20" fill="none"><path d="M1 5c4-4 7 4 10 3s5-5 10-3" stroke="#e04040"/><path d="M1 10c4 3 7-4 10-2s5 4 10 1" stroke="#3ba03b"/><path d="M2 19v-4h3v4zM7 19v-3h3v3zM12 19v-5h3v5zM17 19v-3h3v3z" fill="#3f9a3f"/></svg></div>
  <div class="w-[14px] flex items-center justify-center bg-[#dfe7ea]"><span class="w-0 h-0 border-x-[4px] border-x-transparent border-t-[4px] border-t-[#111]"></span></div>
  <div class="w-[63px] bg-[#1e8fdc] flex items-center gap-[4px] pl-[3px] text-white text-[11.500px]"><svg width="13" height="15" viewBox="0 0 13 15" fill="#fff" stroke="#fff"><circle cx="2.500" cy="7.500" r="2"/><circle cx="10.500" cy="2.500" r="2"/><circle cx="10.500" cy="12.500" r="2"/><path d="M3 7l7-4M3 8l7 4" fill="none"/></svg>Partager</div>
  <div class="w-[24px] flex items-center justify-center ml-[1px]"><svg width="16" height="18" viewBox="0 0 16 18"><rect x="1" y="1" width="8" height="11" fill="#cfd8dd" stroke="#789"/><path d="M4 6h11v8H7l-3 3z" fill="#1d7ed0"/><path d="M7 10h1M10 10h1M12.500 10h1" stroke="#fff" stroke-width="1.500"/></svg></div>
  <div class="w-[22px] flex items-center justify-center"><svg width="14" height="18" viewBox="0 0 14 18"><rect x="1" y="1" width="12" height="16" fill="#eee" stroke="#567"/><path d="M3 4h8" stroke="#d33" stroke-width="2"/><path d="M3 8h8M3 11h8M3 14h8" stroke="#2a2" /></svg></div>
  <div class="w-[23px] flex items-center justify-center"><svg width="16" height="18" viewBox="0 0 16 18"><path d="M2 3h6v3H2zM1 8h6v3H1zM2 13h6v3H2z" fill="#e33"/><path d="M8 3h6v3H8zM9 8h6v3H9zM8 13h6v3H8z" fill="#3a3"/><line x1="8" y1="0" x2="8" y2="18" stroke="#264"/></svg></div>
  <div class="w-[25px] flex items-center justify-center"><svg width="18" height="18" viewBox="0 0 18 18" fill="#f4f7f9" stroke="#2a5fb0"><rect x="1" y="1" width="10" height="9"/><rect x="6" y="6" width="11" height="11"/><path d="M8 14l2-3 2 2 3-4" stroke="#3a3" fill="none"/></svg></div>
  <div class="w-[23px] flex items-center justify-center"><svg width="18" height="18" viewBox="0 0 18 18"><path d="M2 6h6v9H2z" fill="#e33"/><path d="M10 3h6v9h-6z" fill="#5c5"/><path d="M3 17l6-7c-1-3 1-5 4-5l-2 2 1 2 2-1c0 3-2 4-4 4l-6 6z" fill="#222"/></svg></div>
  <div class="w-[16px] flex items-center justify-center text-[#66808c] text-[15px]">«</div>
  <div class="w-[13px] my-[1px] border border-[#7f9ba8] bg-[#cfe0ea] flex items-center justify-center"><span class="w-0 h-0 border-y-[3px] border-y-transparent border-r-[4px] border-r-[#111]"></span></div>
  <div class="w-[1126px] my-[1px] border-y border-[#8aa5b1] bg-[#9ab8c6]"></div>
  <div class="w-[270px] my-[1px] border border-[#8aa5b1] bg-gradient-to-b from-[#bcd9e6] to-[#a9cbd9]"></div>
  <div class="w-[13px] my-[1px] border border-[#7f9ba8] bg-[#cfe0ea] flex items-center justify-center"><span class="w-0 h-0 border-y-[3px] border-y-transparent border-l-[4px] border-l-[#111]"></span></div>
  <div class="flex-1 flex items-center pl-[2px] gap-[6px]">
    <svg width="20" height="20" viewBox="0 0 20 20" fill="none"><circle cx="8" cy="8" r="6" fill="#dfe6ea" stroke="#555" stroke-width="1.500"/><path d="M12 12l4 4" stroke="#222" stroke-width="2"/><path d="M17 1v10M1 18h10" stroke="#1a3fd0" stroke-width="1.500"/></svg>
    <svg width="19" height="19" viewBox="0 0 19 19" fill="none"><circle cx="8" cy="8" r="6" fill="#e8eef1" stroke="#333" stroke-width="1.500"/><path d="M5 8h6" stroke="#1a3fd0" stroke-width="2"/><path d="M12 12l5 5" stroke="#111" stroke-width="2.500"/></svg>
    <svg width="19" height="19" viewBox="0 0 19 19" fill="none"><circle cx="8" cy="8" r="6" fill="#e8eef1" stroke="#333" stroke-width="1.500"/><path d="M5 8h6M8 5v6" stroke="#1a3fd0" stroke-width="2"/><path d="M12 12l5 5" stroke="#111" stroke-width="2.500"/></svg>
    <svg width="16" height="18" viewBox="0 0 16 18" fill="none"><path d="M1 3h14" stroke="#444" stroke-width="2" stroke-dasharray="2 1"/><path d="M8 6v10M4 12l4 4 4-4" stroke="#1a6fd0" stroke-width="2"/></svg>
  </div>
</div>

<!-- windows taskbar -->
<div class="flex-1 flex items-center bg-[#131313] text-[#e8e8e8] font-['Noto_Sans',sans-serif]">
  <div class="w-[45px] flex justify-center"><svg width="16" height="16" viewBox="0 0 16 16" fill="#fff"><path d="M0 2.200L6.500 1.300v6.200H0zM7.500 1.200L16 0v7.500H7.500zM0 8.500h6.500v6.200L0 13.800zM7.500 8.500H16V16l-8.500-1.200z"/></svg></div>
  <div class="w-[271px] h-[38px] bg-[#f2f2f2] flex items-center pl-[10px] gap-[11px] text-[#4a4a4a] text-[14px] tracking-[-0.5px]">
    <svg width="17" height="17" viewBox="0 0 17 17" fill="none" stroke="#333"><circle cx="10" cy="7" r="5.500" stroke-width="1.300"/><line x1="6" y1="11" x2="1" y2="16" stroke-width="1.500"/></svg>
    Taper ici pour rechercher
  </div>
  <div class="w-[46px] flex justify-center"><svg width="16" height="16" viewBox="0 0 16 16" fill="none" stroke="#ddd"><rect x="1" y="3" width="9" height="9"/><path d="M1 1h9M1 15h9"/><path d="M14 1v4M14 7v8" stroke-width="2"/></svg></div>
  <div class="w-[46.500px] flex justify-center"><svg width="24" height="24" viewBox="0 0 24 24"><rect x="2" y="2" width="20" height="17" fill="#1679c9"/><rect x="8" y="2" width="8" height="12" fill="#36b0f0"/><rect x="1" y="17" width="22" height="4" fill="#0e5ea8"/></svg></div>
  <div class="w-[46.500px] flex justify-center"><svg width="24" height="24" viewBox="0 0 24 24" fill="none"><circle cx="12" cy="12" r="11.500" fill="#1ed760"/><path d="M6 8.500c4-1 9-1 12 1M7 12c4-1 7-.5 10 1M8 15.500c3-.7 6-.3 8 1" stroke="#111" stroke-width="2" stroke-linecap="round"/></svg></div>
  <div class="w-[46.500px] flex justify-center"><div class="w-[24px] h-[26px] bg-[#d8101a] text-white text-[15px] font-bold leading-[30px] text-center font-['Liberation_Sans',sans-serif]">IG</div></div>
  <div class="w-[46.500px] flex justify-center"><svg width="24" height="24" viewBox="0 0 24 24"><path d="M5 1h15v22H5z" fill="#dfeedd"/><path d="M12 7h8M12 11h8M12 15h8M15 3v18" stroke="#5a9a5a"/><rect x="2" y="6" width="11" height="12" fill="#2e7d3a"/><path d="M5 9l5 6M10 9l-5 6" stroke="#fff" stroke-width="1.500"/></svg></div>
  <div class="w-[46.500px] flex justify-center"><svg width="24" height="20" viewBox="0 0 24 20"><rect x="2" y="5" width="20" height="12" rx="2" fill="#d6d6d6"/><rect x="6" y="1" width="12" height="7" fill="#f2f2f2"/><rect x="6" y="13" width="12" height="5" fill="#fff"/></svg></div>
  <div class="w-[46.500px] flex justify-center"><svg width="24" height="24" viewBox="0 0 24 24"><path d="M6 2h16v20H6z" fill="#e8eef6"/><path d="M13 6h7M13 10h7M13 14h7M13 18h7" stroke="#4a7bc0"/><rect x="2" y="6" width="12" height="12" fill="#2458a8"/><path d="M4 9l2 6 2-5 2 5 2-6" stroke="#fff" fill="none"/></svg></div>
  <div class="w-[46.500px] flex justify-center"><svg width="24" height="20" viewBox="0 0 24 20"><path d="M1 2h8l2 3h12v14H1z" fill="#e6b53c"/><path d="M1 8h22v11H1z" fill="#f6d365"/></svg></div>
  <div class="w-[46.500px] flex justify-center"><svg width="20" height="24" viewBox="0 0 20 24"><rect x="1" y="1" width="18" height="22" fill="#4a5a68"/><rect x="3" y="3" width="14" height="5" fill="#9ec5e8"/><path d="M4 11h3v3H4zM8.500 11h3v3h-3zM13 11h3v3h-3zM4 16h3v3H4zM8.500 16h3v3h-3zM13 16h3v3h-3z" fill="#e0e6ea"/></svg></div>
  <div class="w-[46.500px] flex justify-center"><svg width="24" height="24" viewBox="0 0 24 24"><path d="M12 3c6 0 10 4 10 9 0 3-2 4-4 4h-2c-2 0-2 2-1 3 1 2-1 3-3 3-6 0-10-5-10-10S6 3 12 3z" fill="#d9dde0"/><circle cx="8" cy="9" r="2" fill="#d33"/><circle cx="14" cy="7" r="2" fill="#2a8ad8"/><circle cx="18" cy="11" r="2" fill="#e8b820"/><path d="M5 20L18 4" stroke="#345" stroke-width="2"/></svg></div>
  <div class="w-[46.500px] flex justify-center"><svg width="22" height="22" viewBox="0 0 22 22"><path d="M11 1l10 10-10 10-3-3 4-7-4-7z" fill="#1f7adb"/><path d="M8 4l-7 7 7 7 3-3-4-4 4-4z" fill="#0d4fa8"/></svg></div>
  <div class="w-[46.500px] flex justify-center"><svg width="24" height="24" viewBox="0 0 24 24"><circle cx="12" cy="12" r="11" fill="#e34133"/><path d="M12 12L2.500 6.500A11 11 0 0 1 21.500 6.500z" fill="#e34133"/><path d="M12 23A11 11 0 0 1 2.500 6.500L7.500 15z" fill="#2fa64a"/><path d="M12 23A11 11 0 0 0 21.500 6.500H12l4.500 8z" fill="#fbc02d"/><circle cx="12" cy="12" r="5" fill="#fff"/><circle cx="12" cy="12" r="4" fill="#3b82e4"/></svg></div>
  <div class="w-[46.500px] h-full bg-[#2e2e2e] border-b-2 border-[#8ab] flex justify-center items-center"><svg width="22" height="22" viewBox="0 0 22 22"><rect x="3" y="10" width="6" height="8" fill="#e33"/><line x1="15" y1="2" x2="15" y2="20" stroke="#4c4"/><rect x="12" y="5" width="6" height="12" fill="#5d5"/></svg></div>
  <div class="flex-1"></div>
  <svg class="mr-[5px] shrink-0" width="24" height="18" viewBox="0 0 24 18"><path d="M5 16c-6 0-6-7-1-8 1-5 8-8 12-3 5-1 8 3 7 6 0 3-2 5-4 5z" fill="#7fb4ea"/></svg>
  <span class="text-[13px] w-[36px]">13°C</span>
  <span class="text-[13px] w-[67px]">Nuageux</span>
  <div class="w-[28px] flex justify-center"><svg width="12" height="8" viewBox="0 0 12 8" fill="none" stroke="#ddd" stroke-width="1.200"><path d="M1 7l5-5.500L11 7"/></svg></div>
  <div class="w-[20px] flex justify-center"><svg width="14" height="18" viewBox="0 0 14 18" fill="none" stroke="#ddd"><rect x="1" y="5" width="8" height="8" rx="1"/><path d="M9 8l4-2v6l-4-2M2 2c2-1 5-1 7 0M2 16c2 1 5 1 7 0"/></svg></div>
  <div class="w-[24px] flex justify-center"><div class="w-[11px] h-[18px] rounded-full bg-[#1477d4] flex items-center justify-center"><svg width="7" height="12" viewBox="0 0 7 12" fill="none" stroke="#fff"><path d="M1 3l5 5.500-2.500 2.500V1L6 3.500 1 9"/></svg></div></div>
  <div class="w-[20px] flex justify-center"><svg width="16" height="10" viewBox="0 0 16 10"><path d="M3 10c-4 0-4-5 0-5 1-4 7-5 9-1 4 0 4 6 0 6z" fill="#ddd"/></svg></div>
  <div class="w-[26px] flex justify-center"><svg width="16" height="16" viewBox="0 0 16 16" fill="none" stroke="#ddd"><rect x="3" y="2" width="12" height="9"/><path d="M1 1h4v5H1zM9 11v4M5 15h8"/></svg></div>
  <div class="w-[22px] flex justify-center"><svg width="15" height="14" viewBox="0 0 15 14" fill="none" stroke="#ccc"><path d="M1 5h3l4-4v12l-4-4H1zM10 4c1 2 1 4 0 6M13 2c2 3 2 7 0 10"/></svg></div>
  <div class="w-[24px] flex justify-center"><svg width="15" height="18" viewBox="0 0 15 18"><path d="M1 2h5v3H1zM8 2h6v3H8zM8 7h6v3H8z" fill="#e8e8e8"/><rect x="1" y="8" width="7" height="9" fill="#d81e2c"/></svg></div>
  <div class="w-[56px] text-center text-[11px] tracking-[-0.5px] leading-[17px] text-[#ddd]">09:16<br>06/01/2025</div>
  <div class="w-[50px] flex justify-center"><svg width="16" height="16" viewBox="0 0 16 16"><path d="M1 1h14v11H8l-3 3v-3H1z" fill="#e8e8e8"/><path d="M3 4h10M3 7h10" stroke="#333"/></svg></div>
</div>

<script>
  const NS = 'http://www.w3.org/2000/svg';
  const chart = document.getElementById('chart');

  function add(tag, attrs, text) {
    const el = document.createElementNS(NS, tag);
    for (const k in attrs) el.setAttribute(k, attrs[k]);
    if (text) el.textContent = text;
    chart.appendChild(el);
    return el;
  }

  const yOf = price => 148 + (21410 - price) * 4.52;

  // shaded zone under the price
  add('rect', {x: 52, y: 797, width: 1692, height: 106, fill: '#cdeafd'});
  add('path', {d: 'M52 903.500H1744M52 797.500H1744M52.500 797V903', stroke: '#333', 'stroke-width': 1, fill: 'none'});

  // horizontal levels
  const levels = [
    {y: 650.5, color: '#4f9e4f', w: 1, dash: '3 3'},
    {y: 691, color: '#8fcb8f', w: 1.5, dash: '3 2.500'},
    {y: 713.5, color: '#4a9e3f', w: 1, dash: '18 8'},
    {y: 735, color: '#5a5fc8', w: 1.500, dash: '18 8'},
    {y: 756, color: '#3fa83f', w: 2, dash: '20 8'},
    {y: 850, color: '#5a5fc8', w: 1.500, dash: '14 8'}
  ];
  levels.forEach(l => add('line', {x1: 52, x2: 1744, y1: l.y, y2: l.y, stroke: l.color, 'stroke-width': l.w, 'stroke-dasharray': l.dash}));
  add('line', {x1: 0, x2: 1749, y1: 201.500, y2: 201.500, stroke: '#222', 'stroke-dasharray': '4 3'});

  // [index, bodyTop, bodyBottom, wickTop, wickBottom, up]  y is in scaled units, see the three bands below
  const bands = [
    {y0: 360, k: 2.8, rows: [
      [0,987,1248,930,1303,0],[1,1028,1245,1005,1245,1],[2,1028,1166,973,1197,0],[3,1170,1385,1060,1398,0],[4,1384,1460,1068,1486,0],
      [5,1225,1453,1215,1453,1],[6,1217,1435,1090,1453,0],[7,1339,1432,1270,1515,1],[8,1339,1359,1286,1462,0],[9,1359,1385,1244,1405,0],
      [10,1324,1385,1290,1506,1],[11,1202,1322,1113,1337,1],[12,1166,1203,1120,1268,1],[13,1171,1295,1112,1430,0],[14,1177,1295,1105,1348,1],
      [15,1140,1177,1100,1236,1],[16,1026,1138,1013,1170,1],[17,1029,1074,960,1138,0],[18,752,1074,740,1083,1],[19,752,772,558,875,0],
      [20,499,766,480,782,1],[21,449,500,435,553,1],[22,450,500,404,500,0],[23,473,500,465,640,1],[24,469,690,430,813,0],
      [25,499,679,470,835,1],[26,391,495,373,578,1],[27,346,392,298,478,1],[28,273,345,265,440,1],[29,270,388,222,393,0],
      [30,317,374,310,472,1],[31,267,318,233,374,1],[32,65,265,50,296,1],[33,62,198,48,198,0],[34,196,218,122,325,0],
      [35,220,315,210,432,0],[36,312,360,292,406,0],[37,354,685,354,685,0],[38,536,685,455,720,1],[39,468,537,447,640,1],
      [40,467,505,440,532,0],[41,508,626,480,665,0],[42,513,626,483,690,1],[43,516,659,516,808,0],[44,631,664,507,712,1],
      [45,634,750,620,785,0],[46,747,879,652,967,0],[47,747,866,615,1108,1],[48,694,746,463,758,1],[49,700,843,637,918,0],
      [50,829,840,778,890,1],[51,826,931,820,965,0],[52,932,1028,895,1028,0],[53,979,1014,960,1038,1],[54,979,1008,967,1044,0],
      [55,942,1011,905,1090,1],[56,928,942,868,985,1],[57,932,942,900,1000,0],[58,945,970,940,1097,0],[59,971,985,950,1015,0],
      [60,895,985,878,1015,1]
    ]},
    {y0: 420, k: 3, rows: [
      [61,76,240,57,382,0],[62,237,341,195,443,0],[63,121,344,92,368,1],[64,124,302,58,302,0],[65,282,318,242,340,1],
      [66,285,310,187,310,0],[67,308,539,255,539,0],[68,378,541,366,545,1],[69,257,379,175,385,1],[70,217,248,175,333,1],
      [71,221,254,172,258,0],[72,234,254,217,325,1],[73,181,235,95,250,1],[74,183,190,124,225,0],[75,188,446,180,488,0],
      [76,446,536,365,594,0],[77,485,540,478,661,1],[78,493,539,473,608,0],[79,539,674,539,760,0],[80,674,763,660,770,0],
      [81,765,776,700,853,0],[82,683,776,634,790,1],[83,607,681,558,686,1],[84,607,619,565,735,0],[85,578,621,533,670,1],
      [86,575,711,553,750,0],[87,598,714,530,755,1],[88,559,598,485,633,1],[89,562,668,562,718,0],[90,669,673,640,715,0],
      [91,626,675,603,682,1],[92,623,728,610,810,0],[93,686,728,678,790,1],[94,683,731,631,731,0],[95,669,728,669,776,1],
      [96,567,672,560,682,1],[97,582,742,567,790,0],[98,635,740,567,757,1],[99,451,635,418,640,1],[100,364,455,352,460,1],
      [101,364,383,322,425,0],[102,383,530,368,555,0],[103,502,528,438,588,1],[104,437,505,423,530,1],[105,436,587,425,620,0],
      [106,437,579,432,588,1],[107,436,438,423,487,0],[108,436,440,408,447,1],[109,437,457,403,477,0],[110,458,494,425,530,0],
      [111,415,494,415,510,1],[112,417,437,390,462,0],[113,434,478,434,482,0],[114,475,493,450,555,0],[115,403,486,400,506,1],
      [116,349,406,333,425,1],[117,350,395,340,450,0],[118,395,445,393,470,0],[119,442,455,397,455,0],[120,449,452,430,487,1],
      [121,446,470,420,478,0],[122,434,467,415,470,1]
    ]},
    {y0: 160, k: 3, rows: [
      [123,1210,1212,1185,1240,1],[124,1180,1217,1168,1260,1],[125,1144,1184,1132,1218,1],[126,1107,1141,1080,1157,1],[127,1095,1110,1068,1115,1],
      [128,1042,1098,1030,1117,1],[129,1041,1043,1040,1078,1],[130,1042,1082,1030,1094,0],[131,1081,1085,1068,1115,0],[132,1036,1088,1027,1088,1],
      [133,1030,1058,996,1062,0],[134,982,1057,982,1057,1],[135,983,986,972,1022,1],[136,985,1034,968,1043,0],[137,820,1026,802,1028,1],
      [138,805,823,790,851,1],[139,667,809,648,815,1],[140,661,710,655,725,0],[141,714,783,700,783,0],[142,782,823,782,883,0],
      [143,790,821,775,863,1],[144,793,818,770,830,0],[145,817,826,757,837,0],[146,825,911,820,925,0],[147,859,914,838,933,1],
      [148,850,857,827,896,1],[149,785,854,778,866,1],[150,782,835,768,837,0],[151,703,836,677,855,1],[152,672,704,624,727,1],
      [153,676,710,648,717,0],[154,670,710,592,722,1],[155,664,670,632,733,1],[156,661,679,631,681,0],[157,673,681,615,730,1],
      [158,670,682,660,798,0],[159,517,681,502,682,1],[160,511,572,511,587,0],[161,546,569,528,595,1],[162,438,543,406,555,1],
      [163,340,441,340,476,1],[164,343,399,307,432,0],[165,353,397,342,435,1],[166,356,366,324,403,0],[167,367,418,358,448,0],
      [168,418,467,408,473,0],[169,280,410,273,467,1],[170,175,278,168,326,1],[171,71,176,62,208,1],[172,71,125,62,140,0]
    ]}
  ];

  bands.forEach(band => band.rows.forEach(([i, top, bottom, wickTop, wickBottom, up]) => {
    const x = 7 + i * 9.06;
    const wick = up ? (i % 2 ? '#6f9fb4' : '#1f6a90') : (i % 2 ? '#c98e92' : '#c0404a');
    add('line', {x1: x, x2: x, y1: band.y0 + wickTop / band.k, y2: band.y0 + wickBottom / band.k, stroke: wick});
    add('rect', {
      x: x - 3, y: band.y0 + top / band.k, width: 6, height: Math.max((bottom - top) / band.k, 1),
      fill: up ? '#0f97d2' : '#f96565', stroke: up ? '#19709c' : '#cc4747'
    });
  }));

  // previous close and reaction circles
  add('line', {x1: 0, x2: 1744, y1: 527, y2: 527, stroke: '#7a1fa2', 'stroke-width': 2});
  add('ellipse', {cx: 433, cy: 753, rx: 18, ry: 16, fill: '#f6b98a', 'fill-opacity': .25, stroke: '#eaa574', 'stroke-width': 1.500});
  add('ellipse', {cx: 741, cy: 703, rx: 18.500, ry: 14, fill: '#f6b98a', 'fill-opacity': .25, stroke: '#eaa574', 'stroke-width': 1.500});

  // level labels
  [['21 299,0', 646.5], ['21 290,0', 687], ['21 285,0', 709.5], ['21 280,2', 731], ['21 275,5', 753], ['21 266,5', 793.5], ['21 254,8', 846], ['21 243,0', 899]]
    .forEach(([t, y]) => add('text', {x: 917, y, 'text-anchor': 'end', 'font-size': 11, fill: '#222'}, t));
  add('text', {x: 10, y: 199, 'font-size': 10.500, fill: '#333'}, 'Clo M');
  add('text', {x: 1741, y: 524, 'text-anchor': 'end', 'font-size': 11, fill: '#222'}, 'Clo 22h 21 326,2');
  add('text', {x: 2, y: 937, 'font-size': 11, fill: '#222'}, 'IT-Finance.com - Temps Réel');

  // frame and axes
  add('path', {d: 'M0.500 122V939M0 939.500H1744.500V122', stroke: '#a8b6bd', fill: 'none'});
  add('line', {x1: 0, x2: 1800, y1: 954.500, y2: 954.500, stroke: '#a8b6bd'});

  for (let p = 21410; p >= 21250; p -= 10) {
    if (p === 21400) continue;
    const y = yOf(p);
    const major = p % 50 === 0;
    add('line', {x1: 1744, x2: 1748, y1: y, y2: y, stroke: '#667'});
    add('text', {x: 1750, y: y + 4, 'font-size': 11, 'font-weight': major ? 'bold' : 'normal', fill: '#222'},
      String(p).slice(0, 2) + ' ' + String(p).slice(2));
  }

  ['19:00', '20:00', '21:00', '22:00', '06', '01:00', '02:00', '03:00', '04:00', '05:00', '06:00', '07:00', '08:00', '09:00', '10:00'].forEach((t, k) => {
    const x = 125 + k * 108.7;
    add('line', {x1: x, x2: x, y1: 939, y2: 943, stroke: '#667'});
    add('text', {x, y: 952, 'text-anchor': 'middle', 'font-size': 11, 'font-weight': t === '06' ? 'bold' : 'normal', fill: '#222'}, t);
  });
  add('line', {x1: 16, x2: 16, y1: 939, y2: 943, stroke: '#667'});
</script>
</body>
</html>
